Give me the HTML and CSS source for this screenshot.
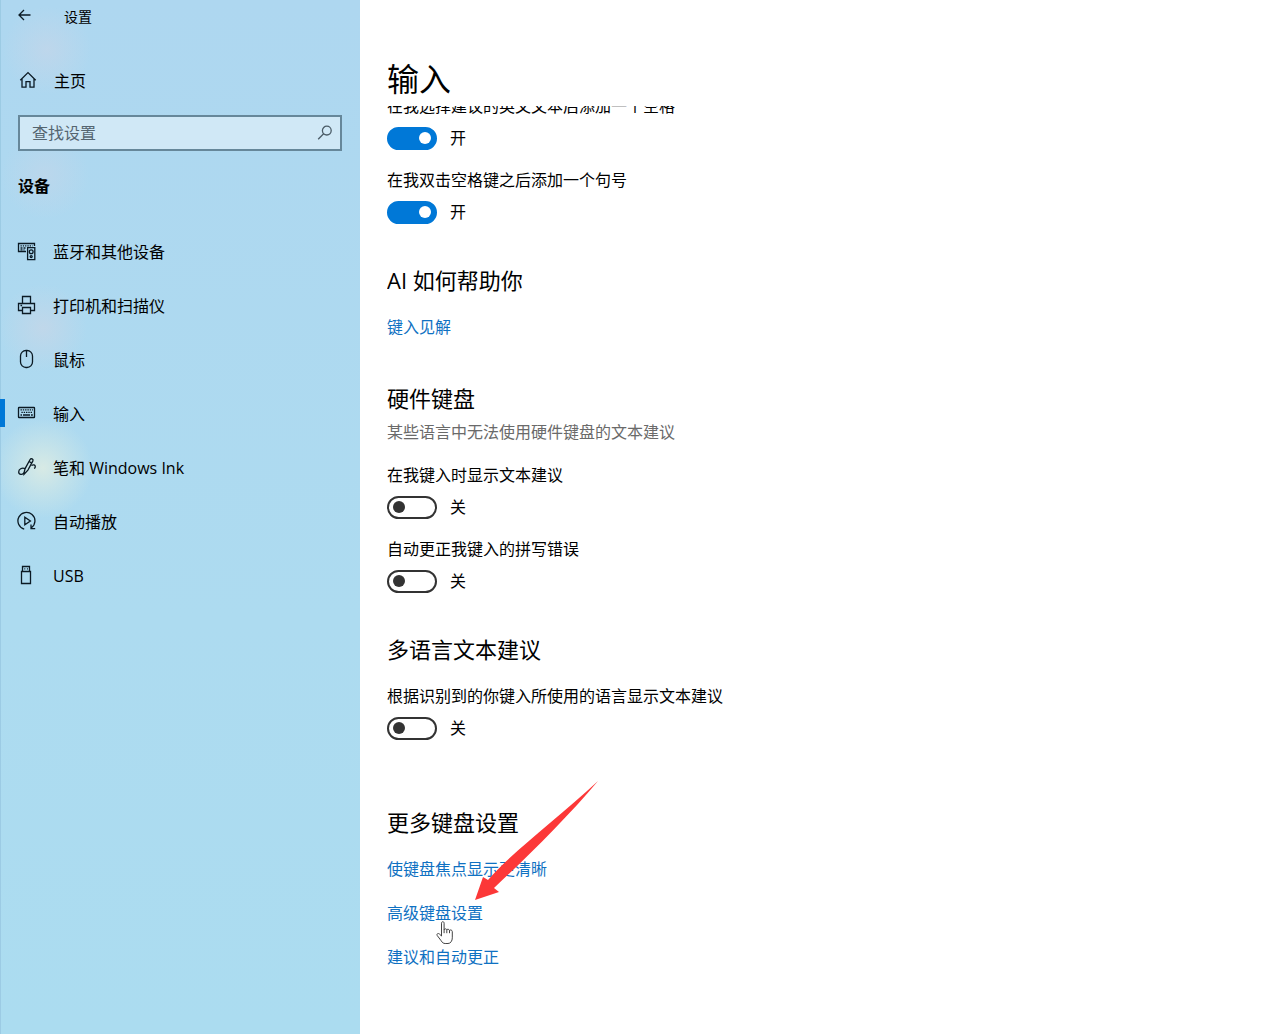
FILE: index.html
```
<!DOCTYPE html>
<html lang="zh-CN">
<head>
    <meta charset="UTF-8">
    <meta name="viewport" content="width=device-width, initial-scale=1.0">
    <title>设置</title>
    <link rel="stylesheet" href="styles.css">
</head>
<body>

<aside class="sidebar">
    <header class="titlebar">
        <button type="button" class="back" aria-label="返回">
            <svg width="14" height="12" viewBox="0 0 14 12"><path d="M12.5 6H1M6 1L1 6l5 5"/></svg>
        </button>
        <span class="app-name">设置</span>
    </header>

    <a href="#" class="nav-item home">
        <svg class="icon" width="20" height="20" viewBox="0 0 20 20"><path d="M2.3 10.2L10 2.6l7.7 7.6M4 8.8v8.4h4v-5.6h4v5.6h4V8.8"/></svg>
        <span>主页</span>
    </a>

    <form class="search">
        <input type="text" placeholder="查找设置" aria-label="查找设置">
        <button type="button" aria-label="搜索">
            <svg width="16" height="16" viewBox="0 0 16 16"><circle cx="9.8" cy="5.6" r="4.4"/><path d="M6.6 8.8L1.2 14.2"/></svg>
        </button>
    </form>

    <h2 class="category">设备</h2>

    <nav>
        <a href="#" class="nav-item">
            <svg class="icon" width="20" height="20" viewBox="0 0 20 20">
                <path d="M9 10.5H1.5V2.5h16V5M10.6 6.6h7.2v12h-7.2z"/>
                <path d="M3.5 4.9h12" stroke-dasharray="1.3 1"/>
                <path d="M3.5 7h5M3.5 8.9h4" stroke-dasharray="2 1"/>
                <circle cx="14.2" cy="10.7" r="1.9"/><circle cx="14.2" cy="15.6" r="1"/>
            </svg>
            <span>蓝牙和其他设备</span>
        </a>
        <a href="#" class="nav-item">
            <svg class="icon" width="20" height="20" viewBox="0 0 20 20">
                <path d="M5.5 8.5v-7h8v7M5.500 15.500h-4v-7h16v7h-4M5.500 12.500h8v6h-8zM3.500 10.500h1.600"/>
            </svg>
            <span>打印机和扫描仪</span>
        </a>
        <a href="#" class="nav-item">
            <svg class="icon" width="20" height="20" viewBox="0 0 20 20">
                <rect x="3.5" y="1.5" width="12" height="17" rx="5.5"/><path d="M9.5 1.5v6.5"/>
            </svg>
            <span>鼠标</span>
        </a>
        <a href="#" class="nav-item active" aria-current="page">
            <svg class="icon" width="20" height="20" viewBox="0 0 20 20">
                <rect x="1.5" y="4.5" width="16" height="10" rx="0.6"/>
                <path d="M3.5 6.9h12.4M4.4 9.4h11" stroke-dasharray="1.4 0.9"/>
                <path d="M3.5 12h1.5M6 12h7M14 12h1.8"/>
            </svg>
            <span>输入</span>
        </a>
        <a href="#" class="nav-item">
            <svg class="icon" width="20" height="20" viewBox="0 0 20 20">
                <path d="M7 15.8l1.1-4.2 5-9.1c1-1.6 3.6-.4 2.8 1.4l-5 9.2L7 17.3z"/>
                <path d="M12 4.5l2.6 1.4M8.1 11.6c-3.2-1.2-6.4.4-6.4 3.3 0 2.8 4 3.5 5.5.7M14.4 8.5c2-1.2 3.9-.6 3.9 1.2 0 .8-.5 1.4-1.3 1.6"/>
            </svg>
            <span>笔和 Windows Ink</span>
        </a>
        <a href="#" class="nav-item">
            <svg class="icon" width="20" height="20" viewBox="0 0 20 20">
                <path d="M7.2 18.1A8.500 8.500 0 1 1 14.400 16.800M14 13.600v4h4.200M7.800 6.300v7.400l5.600-3.700z"/>
            </svg>
            <span>自动播放</span>
        </a>
        <a href="#" class="nav-item">
            <svg class="icon" width="20" height="20" viewBox="0 0 20 20">
                <path d="M5.5 6.5V1.5h7v5M4.5 6.5h9v12h-9zM7.3 3.9h1M9.9 3.9h1"/>
            </svg>
            <span>USB</span>
        </a>
    </nav>
</aside>

<main class="content">
    <h1>输入</h1>

    <div class="scroll-area">
        <section class="group first">
            <div class="setting">
                <label for="addSpace">在我选择建议的英文文本后添加一个空格</label>
                <div class="toggle-row"><input type="checkbox" id="addSpace" class="toggle" checked><span>开</span></div>
            </div>
            <div class="setting">
                <label for="addPeriod">在我双击空格键之后添加一个句号</label>
                <div class="toggle-row"><input type="checkbox" id="addPeriod" class="toggle" checked><span>开</span></div>
            </div>
        </section>

        <section class="group insights">
            <h2>AI 如何帮助你</h2>
            <a href="#" class="link">键入见解</a>
        </section>

        <section class="group">
            <h2 class="with-note">硬件键盘</h2>
            <p class="note">某些语言中无法使用硬件键盘的文本建议</p>
            <div class="setting">
                <label for="showSuggest">在我键入时显示文本建议</label>
                <div class="toggle-row"><input type="checkbox" id="showSuggest" class="toggle"><span>关</span></div>
            </div>
            <div class="setting">
                <label for="autoCorrect">自动更正我键入的拼写错误</label>
                <div class="toggle-row"><input type="checkbox" id="autoCorrect" class="toggle"><span>关</span></div>
            </div>
        </section>

        <section class="group">
            <h2>多语言文本建议</h2>
            <div class="setting">
                <label for="multiLang">根据识别到的你键入所使用的语言显示文本建议</label>
                <div class="toggle-row"><input type="checkbox" id="multiLang" class="toggle"><span>关</span></div>
            </div>
        </section>

        <section class="group more">
            <h2>更多键盘设置</h2>
            <a href="#" class="link">使键盘焦点显示更清晰</a>
            <a href="#" class="link">高级键盘设置</a>
            <a href="#" class="link">建议和自动更正</a>

            <svg class="arrow" width="124" height="120" viewBox="0 0 124 120">
                <path d="M0 119L8 96l5 3C36 72 82 38 123 0 92 37 50 78 19 107l5 4z"/>
            </svg>
            <svg class="hand" width="18" height="24" viewBox="0 0 18 24">
                <path d="M5.5 15V2.2c0-2 2.6-2 2.6 0V9c0-1.6 2.7-1.6 2.7.2 0-1.4 2.7-1.2 2.7.5 0-1.2 2.8-1 2.8.9v6.2c0 3-1.6 5.7-4.3 5.7H9.2c-1.9 0-3-1-4-2.7L1.2 14.5c-.9-1.6 1-2.7 2.2-1.5zM8.1 9v3.2M10.8 9.2v3M13.5 9.7v2.5"/>
            </svg>
        </section>
    </div>
</main>

</body>
</html>
```

FILE: styles.css
```
* {
    box-sizing: border-box;
}

body {
    margin: 0;
    display: flex;
    min-height: 100vh;
    font-family: "Open Sans", "Noto Sans CJK SC", sans-serif;
    font-size: 16px;
    line-height: 24px;
    color: #000;
    background: #fff;
}

h1, h2, p {
    margin: 0;
    font-weight: normal;
}

a {
    text-decoration: none;
}

button {
    padding: 0;
    border: none;
    background: none;
    cursor: pointer;
}

svg {
    display: block;
    fill: none;
    stroke: #0b1a24;
    stroke-width: 1.3;
}

/* Sidebar */
.sidebar {
    flex: 0 0 360px;
    border-left: 1px solid #9ccbe4;
    background:
        radial-gradient(circle at 42px 468px, rgba(226, 238, 226, 0.8), rgba(226, 238, 226, 0.4) 24px, rgba(226, 238, 226, 0) 50px),
        radial-gradient(circle at 42px 328px, rgba(204, 214, 230, 0.6), rgba(204, 214, 230, 0) 44px),
        radial-gradient(circle at 44px 175px, rgba(200, 214, 232, 0.5), rgba(200, 214, 232, 0) 44px),
        radial-gradient(circle at 46px 50px, rgba(200, 214, 232, 0.6), rgba(200, 214, 232, 0) 44px),
        linear-gradient(#aed7f0, #addbf0 60%, #abdcf0);
}

.titlebar {
    display: flex;
    align-items: center;
    height: 34px;
    padding-left: 17px;
    margin-bottom: 20px;
}

.back {
    width: 46px;
    padding-bottom: 4px;
}

.app-name {
    font-size: 14px;
}

.nav-item {
    display: flex;
    align-items: center;
    gap: 16px;
    height: 54px;
    padding-left: 16px;
    color: #000;
}

.nav-item .icon {
    margin-bottom: 2px;
}

.nav-item.home {
    padding-left: 17px;
}

.nav-item.active {
    position: relative;
}

.nav-item.active::before {
    content: "";
    position: absolute;
    left: -1px;
    top: 12px;
    width: 5px;
    height: 28px;
    background: #0078d7;
}

.search {
    display: flex;
    align-items: center;
    height: 36px;
    margin: 7px 18px 23px 17px;
    border: 2px solid #66879a;
    background: #d0e8f6;
}

.search input {
    flex: 1;
    min-width: 0;
    padding: 0 12px;
    border: none;
    outline: none;
    background: none;
    font: inherit;
}

.search input::placeholder {
    color: #546570;
    opacity: 1;
}

.search button {
    margin-right: 7px;
}

.search svg {
    stroke: #4a5b66;
}

.category {
    padding-left: 17px;
    margin-bottom: 27px;
    font-size: 16px;
    font-weight: bold;
}

/* Content */
.content {
    flex: 1;
    min-width: 0;
    padding-left: 27px;
}

h1 {
    height: 106px;
    padding-top: 59px;
    font-size: 32px;
    line-height: 40px;
}

/* the list is scrolled under the page title */
.scroll-area {
    overflow: hidden;
    padding-bottom: 60px;
}

.group {
    margin-bottom: 40px;
}

.group.first {
    margin-top: -12px;
}

.group.insights {
    margin-bottom: 43px;
}

.group h2 {
    margin-bottom: 19px;
    font-size: 22px;
    line-height: 32px;
}

.group h2.with-note {
    margin-bottom: 6px;
}

.note {
    margin-bottom: 19px;
    color: #6a6a6a;
}

.setting + .setting {
    margin-top: 18px;
}

.setting label {
    display: block;
    margin-bottom: 8px;
}

.toggle-row {
    display: flex;
    align-items: center;
    gap: 13px;
}

.toggle {
    appearance: none;
    display: flex;
    align-items: center;
    width: 50px;
    height: 23px;
    margin: 0;
    padding: 0 4px;
    border: 2px solid #333;
    border-radius: 12px;
    cursor: pointer;
}

.toggle::before {
    content: "";
    width: 12px;
    height: 12px;
    border-radius: 50%;
    background: #333;
}

.toggle:checked {
    justify-content: flex-end;
    border-color: #0078d7;
    background: #0078d7;
}

.toggle:checked::before {
    background: #fff;
}

.link {
    display: table;
    color: #0f71c2;
}

.link + .link {
    margin-top: 20px;
}

.more {
    position: relative;
    margin-top: 66px;
    margin-bottom: 0;
}

.arrow {
    position: absolute;
    left: 88px;
    top: -25px;
    pointer-events: none;
}

.arrow path {
    fill: #fc3838;
    stroke: none;
}

.hand {
    position: absolute;
    left: 49px;
    top: 115px;
    pointer-events: none;
}

.hand path {
    fill: #fff;
    stroke: #444;
    stroke-width: 1;
}
```
